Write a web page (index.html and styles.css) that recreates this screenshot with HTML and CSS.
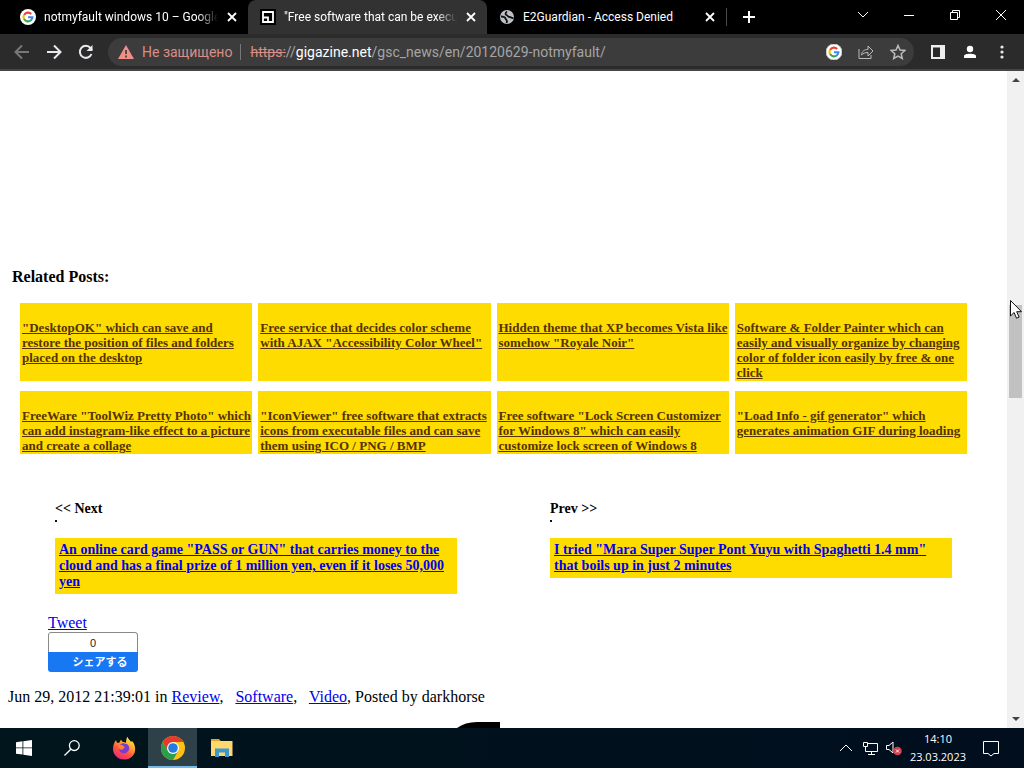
FILE: index.html
```html
<!DOCTYPE html>
<html lang="en">
<head>
<meta charset="utf-8">
<meta name="viewport" content="width=device-width, initial-scale=1">
<title>Free software that can be executed - GIGAZINE</title>
<link rel="stylesheet" href="styles.css">
</head>
<body>
<svg class="defs" aria-hidden="true">
  <symbol id="google" viewBox="0 0 16 16">
    <circle cx="8" cy="8" r="8" fill="#fff"/>
    <g fill="none" stroke-width="2.1">
      <path d="M4.1 5.9A4.4 4.4 0 0 1 11.2 5" stroke="#ea4335"/>
      <path d="M4.1 5.8A4.4 4.4 0 0 0 4.1 10.2" stroke="#fbbc05"/>
      <path d="M4.1 10.1A4.4 4.4 0 0 0 10.9 11.3" stroke="#34a853"/>
      <path d="M8 8.2H12.4A4.4 4.4 0 0 1 10.8 11.4" stroke="#4285f4"/>
    </g>
  </symbol>
  <symbol id="close" viewBox="0 0 10 10"><path d="M1 1 9 9M9 1 1 9" stroke="currentColor" stroke-width="1.8" fill="none"/></symbol>
</svg>

<header class="browser">
  <div class="tabs">
    <div class="tab">
      <svg class="icon"><use href="#google"/></svg>
      <span class="tab-title fade">notmyfault windows 10 – Google</span>
      <button class="tab-close" aria-label="Close tab"><svg><use href="#close"/></svg></button>
    </div>
    <div class="tab active">
      <svg class="icon" viewBox="0 0 16 16"><path fill="#000" d="M0 0h16v16H0z"/><path d="M3 3h10v10H3zM3 8.500h5V13" fill="none" stroke="#fff" stroke-width="1.800"/></svg>
      <span class="tab-title fade">"Free software that can be execut</span>
      <button class="tab-close" aria-label="Close tab"><svg><use href="#close"/></svg></button>
    </div>
    <div class="tab">
      <svg class="icon" viewBox="0 0 16 16"><circle cx="8" cy="8" r="7" fill="#bdc1c6"/><path d="M2 7.500C4 7.500 6 8 6.500 9.500S8 11 8 12.500L7.500 14M8 2.500C6.500 3.500 6 5.500 7.500 6S8.500 8 10.500 8 12 9.500 14.500 9" fill="none" stroke="#111" stroke-width="1.800"/></svg>
      <span class="tab-title">E2Guardian - Access Denied</span>
      <button class="tab-close" aria-label="Close tab"><svg><use href="#close"/></svg></button>
    </div>
    <button class="new-tab" aria-label="New tab"><svg viewBox="0 0 12 12"><path d="M6 0v12M0 6h12" stroke="#fff" stroke-width="2"/></svg></button>
    <div class="window-controls">
      <button aria-label="Search tabs"><svg viewBox="0 0 12 12"><path d="m1 3 5 5 5-5"/></svg></button>
      <button aria-label="Minimize"><svg viewBox="0 0 12 12"><path d="M1 6.500h10"/></svg></button>
      <button aria-label="Restore"><svg viewBox="0 0 12 12"><path d="M1.500 3.500h7v7h-7zM3.500 3.500v-2h7v7h-2"/></svg></button>
      <button aria-label="Close"><svg viewBox="0 0 12 12"><path d="m1 1 10 10M11 1 1 11"/></svg></button>
    </div>
  </div>

  <div class="toolbar">
    <button class="tool dim" aria-label="Back"><svg viewBox="0 0 16 16"><path d="M15 8H2M8 1.500 1.500 8 8 14.500"/></svg></button>
    <button class="tool" aria-label="Forward"><svg viewBox="0 0 16 16"><path d="M1 8h13M8 1.500 14.500 8 8 14.500"/></svg></button>
    <button class="tool" aria-label="Reload"><svg viewBox="0 0 16 16"><path d="M13.500 10A6 6 0 1 1 12.500 4l1.500 2"/><path d="M14.500 1v6h-6z" fill="currentColor" stroke="none"/></svg></button>
    <div class="omnibox">
      <svg class="warning" viewBox="0 0 16 14"><path d="M8 0 16 14H0z" fill="#ee8f88"/><path d="M8 5v4M8 10.500v2" stroke="#3c3c3c" stroke-width="1.700"/></svg>
      <span class="insecure">Не защищено</span>
      <div class="url" role="textbox" aria-label="Address" contenteditable="true" spellcheck="false"><s>https:</s>//<b>gigazine.net</b>/gsc_news/en/20120629-notmyfault/</div>
      <button class="omni" aria-label="Google"><svg><use href="#google"/></svg></button>
      <button class="omni" aria-label="Share"><svg viewBox="0 0 16 16"><path d="M1 5v9.500h12V11M3.500 11C4 7 6.500 5.500 10 5.500V2l5 5-5 5V8.500C7 8.500 5 9.500 3.500 11z"/></svg></button>
      <button class="omni" aria-label="Bookmark"><svg viewBox="0 0 16 16"><path stroke-width="1.500" d="m8 1.500 2 4.600 4.900.4-3.700 3.200 1.100 4.800L8 12l-4.300 2.500 1.100-4.800L1.100 6.500l4.900-.4z"/></svg></button>
    </div>
    <button class="tool" aria-label="Side panel"><svg viewBox="0 0 16 16"><path d="M1 1h14v14H1z" fill="#eee" stroke="none"/><path d="M3 3.500h7v9.500H3z" fill="#292a2a" stroke="none"/></svg></button>
    <button class="tool" aria-label="Profile"><svg viewBox="0 0 16 16"><circle cx="8" cy="5" r="3.200" fill="#fff" stroke="none"/><path d="M2 14v-2c0-3 12-3 12 0v2z" fill="#fff" stroke="none"/></svg></button>
    <button class="tool" aria-label="Menu"><svg viewBox="0 0 16 16"><g fill="currentColor" stroke="none"><circle cx="8" cy="3" r="1.600"/><circle cx="8" cy="8" r="1.600"/><circle cx="8" cy="13" r="1.600"/></g></svg></button>
  </div>
</header>

<div class="viewport">
  <main class="page">
    <h2 class="related-title">Related Posts:</h2>
    <div class="related">
      <div class="card"><a href="#">"DesktopOK" which can save and restore the position of files and folders placed on the desktop</a></div>
      <div class="card"><a href="#">Free service that decides color scheme with AJAX "Accessibility Color Wheel"</a></div>
      <div class="card"><a href="#">Hidden theme that XP becomes Vista like somehow "Royale Noir"</a></div>
      <div class="card"><a href="#">Software &amp; Folder Painter which can easily and visually organize by changing color of folder icon easily by free &amp; one click</a></div>
      <div class="card"><a href="#">FreeWare "ToolWiz Pretty Photo" which can add instagram-like effect to a picture and create a collage</a></div>
      <div class="card"><a href="#">"IconViewer" free software that extracts icons from executable files and can save them using ICO / PNG / BMP</a></div>
      <div class="card"><a href="#">Free software "Lock Screen Customizer for Windows 8" which can easily customize lock screen of Windows 8</a></div>
      <div class="card"><a href="#">"Load Info - gif generator" which generates animation GIF during loading</a></div>
    </div>

    <nav class="pager">
      <section>
        <h3>&lt;&lt; Next</h3>
        <div class="dot"></div>
        <div class="entry"><a href="#">An online card game "PASS or GUN" that carries money to the cloud and has a final prize of 1 million yen, even if it loses 50,000 yen</a></div>
      </section>
      <section>
        <h3>Prev &gt;&gt;</h3>
        <div class="dot"></div>
        <div class="entry"><a href="#">I tried "Mara Super Super Pont Yuyu with Spaghetti 1.4 mm" that boils up in just 2 minutes</a></div>
      </section>
    </nav>

    <div class="social">
      <a href="#">Tweet</a>
      <button class="share"><span class="count">0</span><span class="share-label">シェアする</span></button>
    </div>

    <p class="meta">Jun 29, 2012 21:39:01 in <a href="#">Review</a>, &nbsp; <a href="#">Software</a>, &nbsp; <a href="#">Video</a>, Posted by darkhorse</p>
    <svg class="mark" viewBox="0 0 43 6" aria-hidden="true"><path d="M0 6Q8 0 20 0H43V6z"/></svg>
  </main>
  <div class="scrollbar" aria-hidden="true">
    <svg viewBox="0 0 8 4"><path d="M0 4 4 0l4 4z"/></svg>
    <div class="track"><div class="thumb"></div></div>
    <svg viewBox="0 0 8 4"><path d="m0 0 4 4 4-4z"/></svg>
  </div>
</div>

<footer class="taskbar">
  <div class="system">
    <button aria-label="Start"><svg class="small" viewBox="0 0 16 16"><path fill="#fff" d="M0 2.200 6.500 1.300v6.200H0zM7.300 1.200 16 0v7.500H7.300zM0 8.300h6.500v6.300L0 13.700zM7.300 8.300H16V16l-8.700-1.200z"/></svg></button>
    <button aria-label="Search"><svg class="small" viewBox="0 0 16 16"><g fill="none" stroke="#fff" stroke-width="1.300"><circle cx="10.300" cy="5.600" r="4.900"/><path d="M6.800 9.200.5 15.500"/></g></svg></button>
  </div>
  <div class="apps">
    <button aria-label="Firefox"><svg viewBox="0 0 24 24">
      <defs><linearGradient id="fox" x1=".8" y1="0" x2=".25" y2="1"><stop offset="0" stop-color="#fff14a"/><stop offset=".35" stop-color="#ffa62b"/><stop offset=".65" stop-color="#ff513f"/><stop offset="1" stop-color="#e9268b"/></linearGradient></defs>
      <path fill="url(#fox)" d="M4 4c0 1 .5 2 1.500 3l2-.5L9 3.500c.3 1 1 2 2 2.500 1 .2 2 .3 3 .8 0-2 .4-4.500 1.500-6C16 3 18 4 19 6l1-1c3 3 4 8 2.500 12-2 4.500-6 6.500-10 6.500C5.500 23.500 1 18.500 1 13c0-3.500 1-6.500 3-9z"/>
      <path fill="#793bd4" d="M7 10c1-2 3-3 5-2.500 4 0 6 3 5 6-.8 3-4 4.500-7 3.500-2-.7-3-2.500-3-4 1.500 1.500 4 1 5-.5-1-.8-2.500-.6-3.500-1.500z"/>
      <path fill="#ff8036" d="M6.500 8.500c2 0 4 .4 5 1.500 1 .2 1.500.7 1 1.500-1.500 0-1.500 1-3 1.500-1.500 0-3-1-3-2z"/>
    </svg></button>
    <button class="current" aria-label="Chrome"><svg viewBox="0 0 24 24"><circle cx="12" cy="12" r="12" fill="#fbc116"/><path fill="#e33b2e" d="M1.600 6A12 12 0 0 1 22.400 6H12l-5.200 9z"/><path fill="#2b9e49" d="M1.600 6A12 12 0 0 0 12 24l5.200-9-5.200 3-5.200-3z"/><circle cx="12" cy="12" r="6" fill="#fff"/><circle cx="12" cy="12" r="4.800" fill="#247be0"/></svg></button>
    <button aria-label="File Explorer"><svg viewBox="0 0 24 24"><path fill="#dfa42e" d="M1 3h8l2 2.500H1z"/><path fill="#ffd76d" d="M1 5h21.500v15H1z"/><path fill="#3b98d0" d="M5 12.500h14V21h-4v-4.500H9V21H5z"/></svg></button>
  </div>
  <div class="tray">
    <svg viewBox="0 0 16 16" aria-hidden="true"><path d="m2 11 6-6 6 6"/></svg>
    <svg viewBox="0 0 16 16" aria-hidden="true"><path d="M5.500 3.500h10v8H3.500v-4M9.500 11.500v3M6 14.500h7M1.500 2.500h4v4h-4zM3.500 6.500v2"/></svg>
    <svg viewBox="0 0 16 16" aria-hidden="true"><path d="M.5 5.500H3l4-3.500v11L3 9.500H.5z"/><circle cx="11.500" cy="11" r="4.300" fill="#d83d4b" stroke="none"/><path d="m10 9.500 3 3m0-3-3 3"/></svg>
    <time class="clock" datetime="2023-03-23T14:10"><span>14:10</span><span>23.03.2023</span></time>
    <button aria-label="Notifications"><svg viewBox="0 0 18 18"><path d="M1.500 2.500h15v12h-4.500L9 17l-3-2.500H1.500z"/></svg></button>
  </div>
</footer>
<svg class="cursor" viewBox="0 0 12 19" aria-hidden="true"><path d="M.5.500V16l3.600-3.500 2.400 5.700 2.600-1.100-2.400-5.400h4.800z" fill="#fff" stroke="#111"/></svg>
</body>
</html>
```

FILE: styles.css
```css
* { box-sizing: border-box; }

body {
  margin: 0;
  height: 100vh;
  display: flex;
  flex-direction: column;
  overflow: hidden;
  background: #fff;
  color: #000;
  font-family: "Liberation Serif", "Noto Sans CJK JP", serif;
  font-size: 16px;
  line-height: 18px;
}

h2, h3, p { margin: 0; }
a { color: #0000ee; }
button {
  padding: 0;
  border: 0;
  background: none;
  color: inherit;
  font: inherit;
  display: flex;
  align-items: center;
  justify-content: center;
}
.defs { display: none; }

/* Browser chrome */
.browser {
  flex: none;
  font-family: Roboto, "Noto Sans", sans-serif;
  color: #e8eaed;
}
.tabs {
  display: flex;
  height: 34px;
  background: #000;
  font-size: 12px;
}
.tab {
  flex: 0 1 239px;
  min-width: 0;
  display: flex;
  align-items: center;
  gap: 8px;
  padding: 0 10px 0 20px;
  color: #fff;
}
.tab + .tab { padding-left: 12px; }
.tab.active {
  background: #323232;
  border-radius: 8px 8px 0 0;
}
.tab:first-child { flex-basis: 248px; }
.tab .icon { flex: none; width: 16px; height: 16px; }
.tab-title {
  flex: 1;
  overflow: hidden;
  white-space: nowrap;
}
.fade { mask-image: linear-gradient(to right, #000 88%, transparent); }
.tab-close { flex: none; width: 12px; height: 16px; }
.tab-close svg { width: 10px; height: 10px; }
.new-tab {
  width: 44px;
  height: 18px;
  margin-top: 8px;
  border-left: 1px solid #4a4a4a;
}
.new-tab svg { width: 12px; height: 12px; }
.window-controls { display: flex; margin-left: auto; height: 29px; }
.window-controls button { width: 46px; }
.window-controls svg {
  width: 12px;
  height: 12px;
  fill: none;
  stroke: #fff;
}

.toolbar {
  display: flex;
  align-items: center;
  height: 37px;
  padding: 0 6px;
  background: #2b2b2b;
  border-bottom: 2px solid #454545;
}
.tool { width: 32px; height: 32px; }
.tool svg {
  width: 16px;
  height: 16px;
  fill: none;
  stroke: currentColor;
  stroke-width: 2;
}
.dim { color: #777; }
.omnibox {
  flex: 1;
  min-width: 0;
  display: flex;
  align-items: center;
  height: 28px;
  margin: 0 8px 0 6px;
  padding-left: 10px;
  border-radius: 14px;
  background: #3c3c3c;
  font-size: 14px;
}
.warning { flex: none; width: 16px; height: 14px; margin-right: 8px; }
.insecure {
  padding-right: 8px;
  border-right: 1px solid #777;
  color: #d98d88;
  line-height: 16px;
  white-space: nowrap;
}
.url {
  flex: 1;
  min-width: 0;
  padding-left: 9px;
  overflow: hidden;
  white-space: nowrap;
  color: #a5a5a5;
}
.url s { color: #d98d88; }
.url b { color: #fff; font-weight: 400; }
.omni { flex: none; width: 32px; height: 28px; color: #bbb; }
.omni svg {
  width: 16px;
  height: 16px;
  fill: none;
  stroke: currentColor;
}

/* Web page */
.viewport { flex: 1; min-height: 0; display: flex; }
.page {
  flex: 1;
  min-width: 0;
  overflow: hidden;
  padding-top: 197px;
}
.related-title { margin-left: 12px; font-size: 16px; }
.related {
  display: grid;
  grid-template-columns: repeat(4, 1fr);
  gap: 10px 6px;
  margin: 17px 40px 0 20px;
}
.card {
  padding: 17px 0 1px 2px;
  background: #ffdc00;
  font-size: 13px;
  font-weight: 700;
  line-height: 15px;
}
.card a { color: #553300; }
.pager {
  display: grid;
  grid-template-columns: 1fr 1fr;
  gap: 93px;
  margin: 47px 55px 0;
  font-size: 14px;
  line-height: 16px;
}
.pager h3 { font-size: 14px; }
.dot {
  width: 2px;
  height: 2px;
  margin: 3px 0 16px;
  background: #111;
}
.entry {
  padding: 4px;
  background: #ffdc00;
  font-weight: 700;
}
.social { margin: 20px 48px 0; }
.social a { display: table; }
.share {
  width: 90px;
  flex-direction: column;
  align-items: stretch;
  overflow: hidden;
  border-radius: 3px;
  font-family: "Liberation Sans", "Noto Sans CJK JP", sans-serif;
  font-size: 11px;
  line-height: 20px;
  color: #222;
}
.count {
  height: 20px;
  border: 1px solid #888;
  border-bottom: 0;
  border-radius: 3px 3px 0 0;
}
.share-label {
  height: 20px;
  padding-left: 14px;
  background: #1877f2;
  color: #fff;
  font-weight: 700;
}
.meta { margin: 16px 8px; }
.mark { display: block; width: 43px; height: 6px; margin-left: 457px; }

.scrollbar {
  flex: none;
  width: 17px;
  display: flex;
  flex-direction: column;
  align-items: center;
  padding: 7px 0;
  background: #f1f1f1;
}
.scrollbar svg { width: 8px; height: 4px; fill: #444; }
.track {
  flex: 1;
  width: 13px;
  display: grid;
  grid-template-rows: 223fr 93fr 318fr;
}
.thumb { grid-row: 2; background: #c1c1c1; }
.cursor {
  position: absolute;
  left: 1010px;
  top: 300px;
  width: 12px;
  height: 19px;
}

/* Taskbar */
.taskbar {
  flex: none;
  display: flex;
  gap: 3px;
  height: 40px;
  background: linear-gradient(to right, #00151c, #000e1e);
  color: #fff;
  font-family: "Open Sans", "Noto Sans", sans-serif;
}
.system, .apps { display: flex; }
.system button { width: 48px; }
.apps button { width: 49px; }
.apps svg { width: 24px; height: 24px; }
.system svg { width: 16px; height: 16px; }
.apps .current {
  background: #2e4148;
  border-bottom: 2px solid #76b9ed;
  padding-top: 2px;
}
.tray {
  display: flex;
  align-items: center;
  gap: 8px;
  margin-left: auto;
  padding-right: 24px;
}
.tray svg {
  width: 16px;
  height: 16px;
  fill: none;
  stroke: #fff;
}
.tray button svg { width: 18px; height: 18px; }
.clock {
  display: flex;
  flex-direction: column;
  align-items: center;
  margin-right: 8px;
  font-size: 11px;
  line-height: 18px;
}
```
